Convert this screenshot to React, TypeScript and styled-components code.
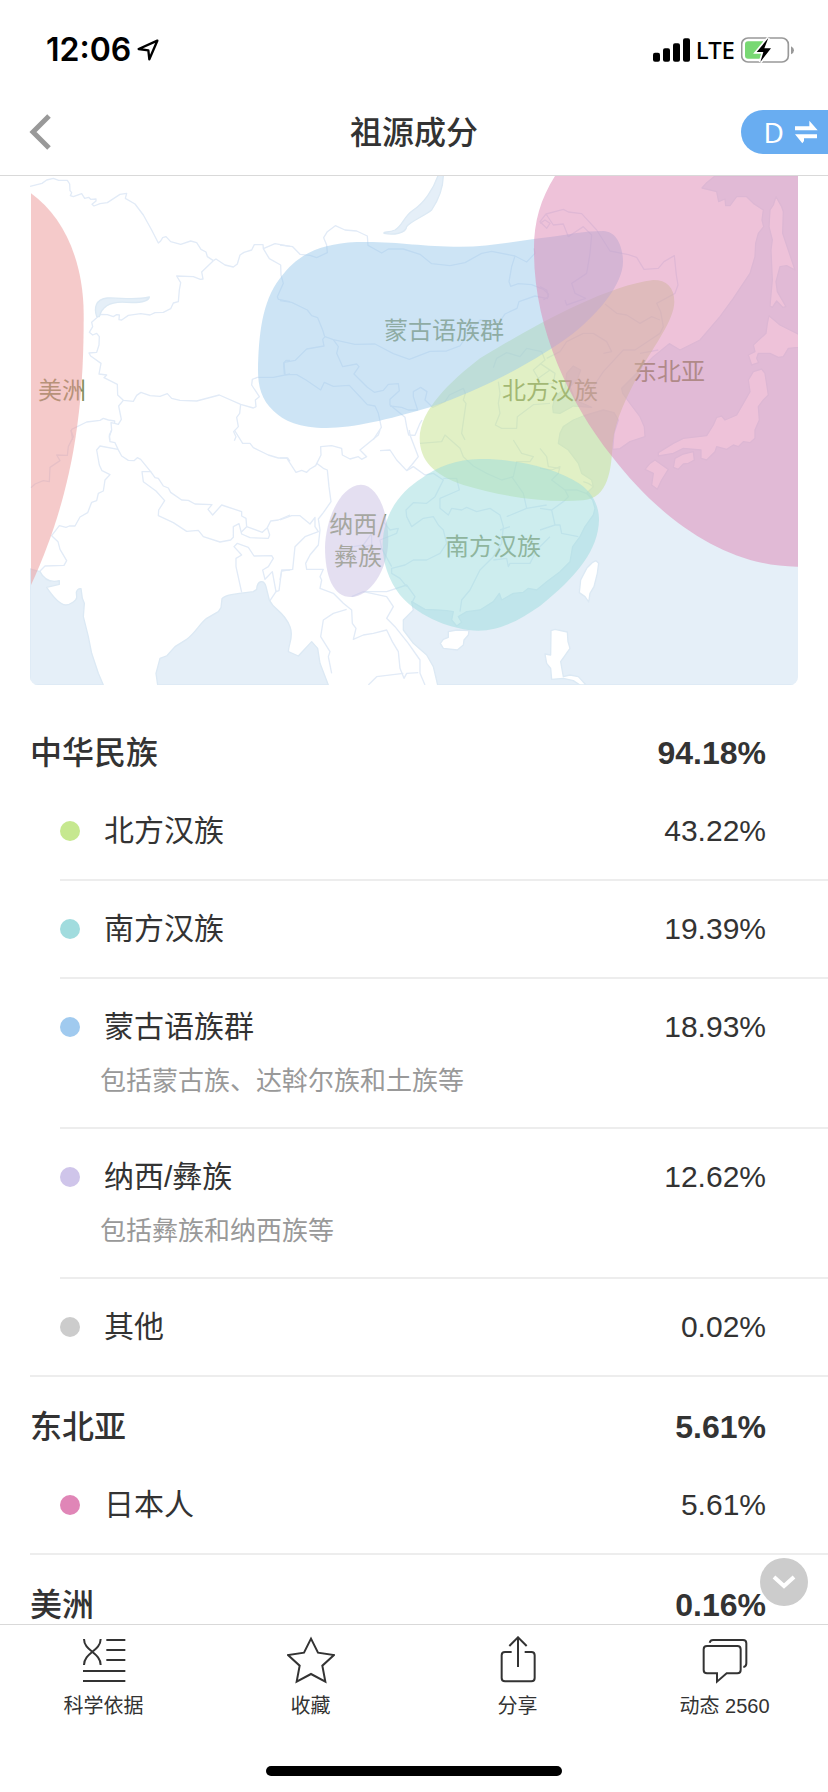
import React from "react";
import styled, { createGlobalStyle } from "styled-components";

const GlobalStyle = createGlobalStyle`
  *, *::before, *::after { box-sizing: border-box; }
  body {
    margin: 0;
    background: #fff;
    color: #333;
    font-family: "Liberation Sans", "Noto Sans CJK SC", sans-serif;
  }
  h1, h2, p, ul { margin: 0; padding: 0; }
  ul { list-style: none; }
  button { border: 0; padding: 0; background: none; color: inherit; font: inherit; cursor: pointer; }
`;

const Screen = styled.div`
  display: flex;
  flex-direction: column;
  height: 100vh;
`;

const StatusBar = styled.div`
  display: flex;
  justify-content: space-between;
  align-items: center;
  height: 88px;
  padding: 12px 34px 0 46px;
  flex: none;
  color: #000;
`;

const StatusGroup = styled.div`
  display: flex;
  align-items: center;
  gap: 6px;
`;

const Clock = styled.span`
  font: 600 32px/40px Inter, sans-serif;
`;

const Network = styled.span`
  font: 500 24px/40px "Noto Sans", sans-serif;
`;

const NavBar = styled.header`
  display: grid;
  grid-template-columns: 1fr auto 1fr;
  align-items: center;
  height: 88px;
  flex: none;
  border-bottom: 1px solid #d9d9d9;
`;

const BackButton = styled.button`
  justify-self: start;
  display: flex;
  padding-left: 28px;
`;

const Title = styled.h1`
  padding-top: 2px;
  font-size: 32px;
  line-height: 48px;
  font-weight: 500;
`;

const SwitchButton = styled.button`
  justify-self: end;
  display: flex;
  align-items: center;
  gap: 10px;
  height: 44px;
  padding: 0 10px 0 23px;
  border-radius: 22px 0 0 22px;
  background: #69adf1;
  color: #fff;
  font: 400 28px/44px "Noto Sans", sans-serif;
`;

const Content = styled.div`
  position: relative;
  flex: 1;
  min-height: 0;
`;

const Scroller = styled.main`
  height: 100%;
  overflow-y: auto;
  scrollbar-width: none;
`;

const MapCard = styled.div`
  margin: 0 30px 18px;
  border-radius: 0 0 8px 8px;
  overflow: hidden;
`;

const MapImage = styled.svg`
  display: block;
  width: 100%;
  height: auto;
`;

const MapLabel = styled.text`
  font: 400 24px "Noto Sans CJK SC", sans-serif;
  fill: #828e5c;
  text-anchor: middle;
`;

const Group = styled.section`
  margin-left: 30px;
  border-bottom: 2px solid #ededed;
`;

const GroupHead = styled.div`
  display: flex;
  justify-content: space-between;
  padding: 26px 62px 6px 0;
  font-size: 32px;
  line-height: 48px;
`;

const GroupName = styled.h2`
  font-size: 32px;
  font-weight: 500;
`;

const GroupShare = styled.span`
  font-weight: 700;
`;

const ItemList = styled.ul`
  padding-left: 30px;
`;

const Item = styled.li`
  padding: 24px 62px 24px 0;

  &:not(:last-child) {
    border-bottom: 2px solid #ededed;
  }
`;

const ItemLine = styled.div`
  display: flex;
  align-items: center;
  font-size: 30px;
  line-height: 48px;
`;

const Dot = styled.span<{ $color: string }>`
  width: 20px;
  height: 20px;
  margin-right: 24px;
  border-radius: 50%;
  background: ${(p) => p.$color};
`;

const ItemName = styled.span`
  flex: 1;
`;

const ItemNote = styled.p`
  margin: 10px 0 2px 40px;
  color: #999;
  font-size: 26px;
  line-height: 40px;
`;

const MoreButton = styled.button`
  position: absolute;
  right: 20px;
  bottom: 18px;
  display: grid;
  place-items: center;
  width: 48px;
  height: 48px;
  border-radius: 50%;
  background: #ccc;
`;

const TabBar = styled.footer`
  flex: none;
  height: 168px;
  padding-bottom: 16px;
  display: flex;
  flex-direction: column;
  justify-content: space-between;
  align-items: center;
  border-top: 1px solid #d9d9d9;
  background: #fff;
`;

const Tabs = styled.nav`
  display: grid;
  grid-template-columns: repeat(4, 1fr);
  width: 100%;
`;

const Tab = styled.button`
  display: flex;
  flex-direction: column;
  align-items: center;
  gap: 10px;
  padding-top: 11px;
  font-size: 20px;
  line-height: 24px;
`;

const TabIcon = styled.svg`
  width: 48px;
  height: 48px;
  fill: none;
  stroke: #333;
  stroke-width: 6;
`;

const HomeIndicator = styled.div`
  width: 296px;
  height: 10px;
  border-radius: 5px;
  background: #000;
`;

/* Terrain is drawn on a grid three times finer than the map, in six tiles. */
const TILES: { x: number; y: number; borders: string[] }[] = [
  {
    x: 0,
    y: 0,
    borders: [
      "M30 49 L66 40 L80 30 L100 25 L116 31 L142 31 L149 42 L150 62 L155 68 L151 77 L160 80 L185 71 L194 85 L206 82 L212 88 L228 87 L228 93 L216 103 L222 108 L240 101 L262 98 L300 73 L320 70 L316 85 L345 102 L370 135 L395 180 L415 219 L422 213 L428 203 L438 200 L452 215 L482 223 L512 213 L530 218 L543 238 L558 246 L562 260 L580 272",
      "M580 272 L545 306 L549 327 L541 328 L520 320 L470 318 L482 338 L478 360 L475 395 L460 399 L452 416 L430 427 L405 428 L390 435 L362 431 L325 436 L305 450 L297 449 L298 435 L290 434 L280 440 L262 434 L242 433 L215 457 L218 470 L208 487 L218 495 L230 490 L238 500 L237 525 L230 547 L207 549 L212 558 L243 580 L237 612 L260 615 L252 623 L292 643 L293 675 L310 691 L340 694 L350 676 L363 667 L390 677 L420 679 L442 671 L455 685 L480 691 L530 693 L598 675 L662 703 L700 714 L708 710 L706 690 L718 680 L695 645 L697 628 L712 622 L760 622 L810 612",
      "M580 272 L588 267 L615 285 L640 291 L652 282 L660 255 L672 247 L695 240 L703 224 L729 224 L730 236 L765 221 L810 229",
      "M730 236 L748 266 L782 285 L783 315 L790 340 L772 380 L775 388 L810 395",
      "M793 612 L791 580 L798 571 L810 571",
      "M310 691 L296 708 L304 748 L295 763 L284 760 L284 753 L265 750 L250 745 L240 751 L200 756 L155 778 L154 785 L158 810",
      "M284 760 L273 758 L275 780 L268 800 L269 810",
      "M662 703 L659 730 L650 742 L655 770 L641 785 L648 800 L643 812",
    ],
  },
  {
    x: 780,
    y: 0,
    borders: [
      "M0 225 L38 230 L60 253 L90 256 L110 263 L142 248 L140 225 L131 203 L142 185 L166 167 L195 180 L230 183 L262 198 L264 226 L305 249 L325 237 L370 237 L420 253 L455 281 L510 287 L555 278 L605 250 L635 244 L705 258 L740 276 L765 250 L762 235",
      "M705 258 L695 290 L687 335 L692 349 L715 341 L755 344 L790 358 L806 373 L802 386 L765 378 L717 395 L711 415 L675 432 L660 454 L600 450 L580 470 L555 505 L540 528 L500 543 L450 544 L388 568 L340 551 L285 522 L225 523 L160 509 L135 500 L128 508 L132 528 L80 537 L46 571 L12 577 L15 614 L50 614 L78 630 L122 660 L133 637 L160 649 L208 646 L235 675 L262 704 L285 708 L295 730 L304 772 L280 809",
      "M0 392 L35 397 L82 420 L95 437 L113 443 L128 480 L134 500",
      "M160 509 L175 530 L170 550 L188 590 L230 582 L237 590 L222 612 L262 652 L283 667 L310 661 L325 643 L355 641 L358 662 L330 688 L330 705 L375 742 L380 770 L386 795 L405 796 L420 760 L426 750",
      "M330 708 L365 712 L385 720 L413 720 L400 680 L400 665 L422 652 L441 665 L435 690 L458 712 L495 695 L508 675 L550 655 L556 670 L550 690 L558 700 L545 790 L555 810",
      "M640 593 L650 565 L680 548 L720 560 L740 535 L785 545 L795 570 L760 600 L775 625 L810 600",
      "M655 635 L660 670 L655 700 L660 730 L646 765 L665 775 L710 775 L712 740 L760 704 L810 700",
    ],
  },
  {
    x: 1560,
    y: 0,
    borders: [
      "M0 160 L15 150 L30 160 L20 175 L0 155 L18 132 L70 118 L85 126 L125 131 L170 180 L210 243 L265 254 L290 262 L312 298 L355 295 L372 275 L403 257 L409 315 L414 345 L405 370 L350 400 L362 425 L370 470 L360 490",
      "M18 132 L40 165 L70 162 L85 200 L130 170 L155 195 L150 250 L140 310 L95 340 L105 370 L137 385 L80 405 L75 390",
      "M195 402 L230 430 L260 435 L300 460 L335 440 L360 450",
      "M20 565 L60 545 L80 515 L130 490 L160 490 L200 515 L215 545 L190 550",
      "M360 490 L330 510 L285 540 L250 540 L190 605 L160 650",
      "M0 350 L20 360 L25 380 L10 390 M355 540 L300 550 M0 580 L45 610 L40 640 L0 640",
    ],
  },
  {
    x: 0,
    y: 780,
    borders: [
      "M152 0 L160 20 L145 50 L142 76 L110 75 L120 92 L90 112 L88 155 L70 152 L45 162 L33 173",
      "M275 0 L268 15 L270 35 L285 38 L294 58 L240 48 L230 60 L238 105 L246 122 L270 134 L255 150 L250 183 L235 190 L230 212 L215 217 L203 248 L180 261 L165 288 L148 288 L138 292 L118 287 L95 317 L114 335 L120 358 L140 392 L132 406 L75 408 L58 425",
      "M294 58 L305 78 L325 91 L342 92 L352 83 L362 88 L392 125 L366 125 L370 155 L408 183 L434 212 L416 240 L415 257 L460 278 L500 304 L535 301 L550 320 L600 336 L632 330 L640 322 L640 290 L657 281 L665 312 L690 323 L745 325 L749 315 L742 293 L727 307 L680 290 L662 308",
      "M392 125 L405 143 L415 145 L430 168 L445 174 L452 187 L485 210 L505 211 L525 222 L576 224 L564 238 L578 255 L605 225 L665 245 L665 258 L678 265 L680 290",
      "M742 293 L752 273 L775 270 L810 255",
      "M643 0 L668 40 L690 40 L700 53 L745 75 L775 84 L803 84 L810 94",
      "M665 487 L648 410 L648 385 L665 375 L642 350 L652 340 L685 352 L702 378 L755 377 L760 385 L745 410 L728 420 L735 448 L757 425 L768 485 L777 482 L785 420 L810 420",
      "M768 485 L750 512",
    ],
  },
  {
    x: 780,
    y: 780,
    borders: [
      "M0 84 L20 84 L48 127 L65 121 L80 127 L90 117 L107 107 L123 75 L122 50 L155 47 L185 55 L187 75 L210 87 L235 80 L245 88 L260 80 L240 60 L295 15 L300 0",
      "M110 100 L130 115 L142 120 L147 170 L153 215 L130 248 L115 267 L120 300 L115 345 L90 375 L77 400 L80 418 L130 418 L120 440 L125 450 L120 475 L160 490 L190 520 L215 540 L217 580 L228 595 L220 628 L250 615 L280 610 L320 600 L337 635 L355 665 L360 715 L372 745 L380 730 L415 728",
      "M0 270 L35 257 L60 257 L90 282 L105 262 L105 290 L115 305 L75 320 L45 350 L38 418 L5 423 L0 450",
      "M200 538 L160 550 L130 570 L122 620 L150 665 L145 680 L155 730",
      "M300 62 L330 60 L350 90 L380 122 L395 105 L415 80 L390 15 L388 0",
      "M380 122 L400 110 L435 135 L460 130 L490 150 L465 200 L440 220 L400 218 L378 240 L380 260 L395 290 L430 265 L460 260 L475 285 L490 300 L500 340 L480 370 L440 390 L400 390 L375 405 L335 415 L335 430 L360 445 L380 470",
      "M215 500 L250 485 L320 500 L340 530 L320 565 L345 590 L385 640 L420 690 L420 730 L435 765",
      "M250 485 L320 485 L380 465 L405 500 L395 520",
      "M420 40 L485 35 L495 15 L540 55 L550 80 L580 108 L620 130 L665 150 L700 140 L710 95 L750 95 L760 80 L725 70 L700 30",
      "M490 145 L530 145 L538 180 L480 205 L480 235 L505 255 L515 235 L545 240 L560 232 L590 245 L630 235 L660 255 L670 290 L665 340 L640 380 L600 420 L570 480 L545 510 L540 545",
      "M680 260 L740 235 L730 190 L695 140 M740 235 L800 225 M660 300 L690 290 M640 390 L680 385 L685 410 L690 400 L750 400 L770 360 L810 320",
      "M220 350 L250 345 L275 310 L275 345 L235 355 M265 765 L290 740 L370 730",
      "M310 275 L330 300 L355 295 L350 310 L300 330 L305 355 L335 410",
    ],
  },
  {
    x: 1560,
    y: 780,
    borders: [
      "M0 115 L35 120 L60 110 L55 130 L35 150 L75 180 L85 200 L70 215 L35 240 L45 285 L60 285 L65 310 L115 320",
      "M75 180 L110 180 L150 195 M130 155 L145 160 L160 170 M0 55 L20 80 L25 110 L60 115 M35 240 L0 235 M45 285 L0 300",
    ],
  },
];

const SEAS = [
  /* Arabian Sea */
  "M30 1197 L60 1205 C70 1225 85 1240 118 1232 V1243 L80 1252 C100 1282 118 1303 137 1305 C152 1304 172 1290 170 1280 L169 1267 C172 1258 178 1255 183 1256 L187 1285 L193 1300 L190 1340 L205 1400 L215 1450 L235 1510 L250 1545 H30Z",
  /* Bay of Bengal */
  "M413 1545 L408 1510 L420 1465 L440 1458 L465 1430 L500 1408 C525 1390 540 1360 560 1345 L595 1325 L603 1313 L606 1286 C615 1275 640 1272 700 1265 L710 1258 C712 1230 732 1228 738 1250 L748 1290 C765 1325 790 1320 810 1370 C822 1400 806 1420 805 1445 L835 1458 L875 1415 L893 1435 L900 1480 L925 1545Z",
  /* Pacific coast from Vietnam to Okhotsk */
  "M1253 1545 L1240 1490 L1220 1455 L1180 1420 L1150 1380 L1150 1350 L1180 1320 L1175 1295 L1215 1318 L1250 1320 L1280 1322 L1300 1325 L1295 1350 L1310 1368 L1325 1357 L1315 1340 L1340 1325 L1380 1320 L1420 1295 L1438 1270 L1445 1290 L1480 1270 L1510 1267 L1525 1255 L1550 1260 L1580 1235 L1620 1205 L1650 1175 L1658 1130 L1680 1100 L1695 1070 L1720 1035 L1725 1015 L1718 990 L1700 970 L1720 950 L1715 930 L1685 910 L1675 880 L1645 840 L1615 820 L1620 790 L1630 770 L1660 750 L1690 738 L1715 730 L1750 720 L1782 728 L1795 750 L1782 790 L1778 838 L1800 836 L1830 815 L1875 800 L1873 770 L1860 740 L1830 700 L1808 670 L1805 655 L1850 610 L1900 560 L1948 521 L1980 540 L2040 510 L2100 440 L2140 385 L2190 310 L2205 260 L2207 220 L2215 190 L2231 170 L2226 150 L2230 120 L2200 100 L2180 80 L2150 80 L2130 107 L2117 107 L2115 87 L2096 95 L2090 65 L2046 54 L2060 38 L2085 18 H2336 V1545Z",
  /* Bohai */
  "M1598 710 L1605 680 L1635 655 L1640 610 L1660 588 L1682 600 L1672 628 L1650 650 L1665 690 L1715 712 L1660 708 L1620 730 L1600 728Z",
  /* Balkhash */
  "M230 440 C222 415 225 388 262 384 C300 382 340 392 388 381 C385 395 360 399 320 397 C270 393 245 412 238 440Z",
  /* Baikal */
  "M1255 14 C1240 60 1210 100 1180 120 C1150 140 1150 165 1125 180 C1105 188 1090 185 1092 190 C1120 196 1158 190 1160 170 C1170 155 1210 140 1235 120 C1255 90 1270 50 1270 14Z",
];

const ISLANDS = [
  /* Sakhalin */
  "M2268 80 L2285 110 L2290 125 L2288 190 L2325 300 L2300 287 L2280 290 L2268 335 L2272 365 L2298 410 L2288 412 L2270 393 L2257 412 L2250 408 L2257 330 L2253 240 L2257 210 L2247 170 L2250 120 L2260 105Z",
  /* Hokkaido */
  "M2247 437 L2280 465 L2336 493 V532 L2305 535 L2290 560 L2275 562 L2250 550 L2215 550 L2210 565 L2216 578 L2195 585 L2185 555 L2205 545 L2200 525 L2238 490 L2242 460Z",
  /* Honshu */
  "M2225 597 L2235 610 L2245 675 L2230 690 L2215 710 L2218 750 L2205 780 V805 L2190 818 L2170 815 L2155 830 L2140 825 L2120 838 L2090 830 L2085 845 L2060 870 L2043 865 L2043 840 L1990 835 L1960 850 L1915 858 V848 L1960 820 L1990 805 L2060 797 L2080 765 L2090 742 L2105 738 L2115 750 L2150 735 L2170 700 L2190 665 L2185 630 L2200 605Z",
  /* Kyushu */
  "M1905 870 L1945 898 L1925 930 L1912 958 L1895 945 L1900 910 L1875 898 L1890 880Z",
  /* Shikoku */
  "M1965 865 L1990 852 L2020 845 L2023 870 L2005 880 L1990 882 L1975 898 L1960 892Z",
  /* Taiwan */
  "M1728 1172 L1736 1180 L1732 1210 L1722 1250 L1710 1270 L1706 1296 L1695 1280 L1678 1268 L1682 1230 L1700 1195 L1718 1177Z",
  /* Luzon */
  "M1593 1382 L1605 1378 L1642 1386 L1644 1415 L1650 1435 L1622 1475 L1630 1520 L1650 1515 L1675 1520 L1698 1545 L1680 1545 L1660 1532 L1630 1525 L1595 1528 L1592 1495 L1580 1480 L1575 1452 L1592 1455Z",
  /* Hainan */
  "M1285 1385 L1310 1380 L1347 1382 L1345 1395 L1332 1410 L1330 1425 L1312 1440 L1270 1435 L1261 1420 L1270 1408 L1285 1402Z",
];

const REGIONS = [
  { color: "#c3e18b", d: "M1900 330 C1940 330 1963 352 1963 395 C1963 450 1900 530 1865 595 C1820 680 1785 750 1778 820 C1774 900 1765 985 1690 991 C1560 1000 1430 975 1330 945 C1240 915 1199 870 1199 805 C1200 720 1290 635 1380 565 C1480 505 1735 350 1900 330Z" },
  { color: "#9bc9eb", d: "M714 600 C716 500 725 395 780 325 C835 250 900 222 1010 216 C1130 213 1200 230 1320 230 C1420 230 1500 210 1590 201 C1650 193 1690 183 1750 183 C1790 184 1809 230 1809 275 C1809 340 1740 425 1660 490 C1560 565 1400 655 1230 712 C1100 750 1000 774 920 774 C840 774 790 752 760 722 C725 690 714 650 714 600Z" },
  { color: "#c9bfe3", d: "M1023 944 C1075 946 1105 1030 1105 1110 C1104 1200 1050 1281 993 1281 C940 1281 915 1220 915 1130 C918 1040 965 944 1023 944Z" },
  { color: "#9bdbdd", d: "M1380 867 C1470 866 1600 888 1680 942 C1720 970 1737 1010 1737 1050 C1735 1140 1670 1220 1560 1308 C1500 1350 1440 1382 1375 1382 C1300 1380 1200 1345 1140 1275 C1105 1230 1087 1175 1088 1120 C1092 1020 1150 960 1205 925 C1250 890 1310 868 1380 867Z" },
  { color: "#eb9595", d: "M33 70 C130 140 190 270 191 430 C192 700 165 960 33 1245Z" },
  { color: "#dd85b3", d: "M1605 18 C1560 90 1540 160 1542 250 C1544 480 1650 700 1775 858 C1930 1060 2130 1192 2336 1190 V18Z" },
];

const LABELS = [
  { text: "美洲", x: 62, y: 399 },
  { text: "蒙古语族群", x: 444, y: 339 },
  { text: "北方汉族", x: 550, y: 399 },
  { text: "东北亚", x: 669, y: 380 },
  { text: "纳西/", x: 358, y: 533 },
  { text: "彝族", x: 358, y: 565 },
  { text: "南方汉族", x: 493, y: 555 },
];

const FINE_GRID = "translate(20 170) scale(0.33333)";

function AncestryMap() {
  return (
    <MapCard>
      <MapImage viewBox="30 176 768 509" role="img" aria-label="祖源分布">
        <g transform={FINE_GRID} fill="none" stroke="#e2ebf7" strokeWidth={4} strokeLinejoin="round">
          {TILES.map((tile) => (
            <g key={`${tile.x}-${tile.y}`} transform={`translate(${tile.x} ${tile.y})`}>
              {tile.borders.map((d) => <path key={d} d={d} />)}
            </g>
          ))}
          {SEAS.map((d) => <path key={d} d={d} fill="#e5eff8" stroke="#dce9f4" />)}
          {ISLANDS.map((d) => <path key={d} d={d} fill="#fff" stroke="#dce9f4" />)}
        </g>
        {LABELS.map((l) => (
          <MapLabel key={l.text} x={l.x} y={l.y}>{l.text}</MapLabel>
        ))}
        <g transform={FINE_GRID}>
          {REGIONS.map((r) => <path key={r.color} d={r.d} fill={r.color} fillOpacity={0.5} />)}
        </g>
      </MapImage>
    </MapCard>
  );
}

type Entry = { name: string; share: string; color: string; note?: string };

const GROUPS: { name: string; share: string; items: Entry[] }[] = [
  {
    name: "中华民族",
    share: "94.18%",
    items: [
      { name: "北方汉族", share: "43.22%", color: "#c6e88f" },
      { name: "南方汉族", share: "19.39%", color: "#a1dcde" },
      { name: "蒙古语族群", share: "18.93%", color: "#a0caef", note: "包括蒙古族、达斡尔族和土族等" },
      { name: "纳西/彝族", share: "12.62%", color: "#cfc5ea", note: "包括彝族和纳西族等" },
      { name: "其他", share: "0.02%", color: "#ccc" },
    ],
  },
  { name: "东北亚", share: "5.61%", items: [{ name: "日本人", share: "5.61%", color: "#e086b7" }] },
  { name: "美洲", share: "0.16%", items: [] },
];

const TABS = [
  {
    label: "科学依据",
    icon: <path d="M12 9C12 45 62 50 62 87M62 9C62 45 12 50 12 87M79 12h57M79 42h57M79 72h57M9 105h127M9 135h127" />,
  },
  { label: "收藏", icon: <path d="M72 8L93 50L141 57L106 89L115 137L72 114L29 137L38 89L3 57L51 50Z" /> },
  {
    label: "分享",
    icon: <path d="M72 4V93M46 30L72 4L98 30M53 48H33Q23 48 23 58V126Q23 136 33 136H112Q122 136 122 126V58Q122 48 112 48H92" />,
  },
  {
    label: "动态 2560",
    icon: <path d="M18 30H109Q119 30 119 40V102Q119 112 109 112H77L48 137V112H18Q8 112 8 102V40Q8 30 18 30ZM26 20Q28 12 36 12H126Q136 12 136 22V82Q136 92 127 93" />,
  },
];

export default function App() {
  return (
    <Screen>
      <GlobalStyle />
      <StatusBar>
        <StatusGroup>
          <Clock>12:06</Clock>
          <svg width="22" height="22" viewBox="0 0 66 66" fill="none" stroke="#000" strokeWidth="7" strokeLinejoin="round">
            <path d="M61 5L5 30L34 34L37 61Z" />
          </svg>
        </StatusGroup>
        <StatusGroup>
          <svg width="37" height="24" viewBox="0 0 111 72">
            <rect x="0" y="44" width="21" height="27" rx="6" />
            <rect x="30" y="31" width="21" height="40" rx="6" />
            <rect x="60" y="16" width="21" height="55" rx="6" />
            <rect x="90" y="1" width="21" height="70" rx="6" />
          </svg>
          <Network>LTE</Network>
          <svg width="53" height="26" viewBox="0 0 159 78">
            <rect x="2" y="3" width="140" height="72" rx="19" fill="none" stroke="#999" strokeWidth="5" />
            <path d="M21 13H66V65H21Q12 65 12 56V22Q12 13 21 13Z" fill="#78d873" />
            <path d="M150 28Q159 32 159 40Q159 48 150 52Z" fill="#999" />
            <path d="M82 3L47 45H67L58 75L90 34H70Z" fill="#000" stroke="#fff" strokeWidth="10" paintOrder="stroke" />
          </svg>
        </StatusGroup>
      </StatusBar>

      <NavBar>
        <BackButton aria-label="返回">
          <svg width="26" height="36" viewBox="0 0 26 36" fill="none" stroke="#999" strokeWidth="5">
            <path d="M21 2L5 18L21 34" />
          </svg>
        </BackButton>
        <Title>祖源成分</Title>
        <SwitchButton>
          D
          <svg width="24" height="24" viewBox="0 0 72 72" fill="#fff">
            <path d="M3 19H46V2L71 31H3ZM69 43H3L25 70L30 63V55H69Z" />
          </svg>
        </SwitchButton>
      </NavBar>

      <Content>
        <Scroller>
          <AncestryMap />
          {GROUPS.map((group) => (
            <Group key={group.name}>
              <GroupHead>
                <GroupName>{group.name}</GroupName>
                <GroupShare>{group.share}</GroupShare>
              </GroupHead>
              <ItemList>
                {group.items.map((item) => (
                  <Item key={item.name}>
                    <ItemLine>
                      <Dot $color={item.color} />
                      <ItemName>{item.name}</ItemName>
                      <span>{item.share}</span>
                    </ItemLine>
                    {item.note && <ItemNote>{item.note}</ItemNote>}
                  </Item>
                ))}
              </ItemList>
            </Group>
          ))}
        </Scroller>
        <MoreButton aria-label="更多">
          <svg width="24" height="16" viewBox="0 0 24 16" fill="none" stroke="#fff" strokeWidth="4">
            <path d="M2 3L12 12L22 3" />
          </svg>
        </MoreButton>
      </Content>

      <TabBar>
        <Tabs>
          {TABS.map((tab) => (
            <Tab key={tab.label}>
              <TabIcon viewBox="0 0 144 144">{tab.icon}</TabIcon>
              {tab.label}
            </Tab>
          ))}
        </Tabs>
        <HomeIndicator />
      </TabBar>
    </Screen>
  );
}
